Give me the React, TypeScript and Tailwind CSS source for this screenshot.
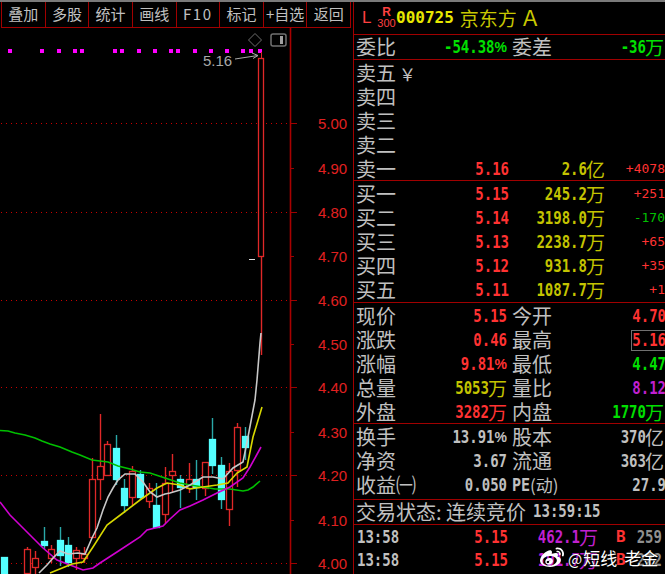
import type { ReactNode } from "react";
import { FaWeibo } from "react-icons/fa";

const CJK = "font-['Noto_Sans_CJK_SC',sans-serif]";
const MONO = "font-['DejaVu_Sans_Mono',monospace]";

const TOOLS = ["叠加", "多股", "统计", "画线", "F10", "标记", "+自选", "返回"];

// x, bodyTop, bodyBottom, wickTop, wickBottom, up
const CANDLES: [number, number, number, number, number, boolean][] = [
  [4, 557, 576, 557, 576, false],
  [27, 549, 573, 547, 576, true],
  [35, 558, 567, 551, 576, true],
  [44, 541, 545, 527, 549, false],
  [51, 549, 558, 545, 563, true],
  [60, 540, 555, 527, 566, false],
  [68, 545, 562, 537, 567, false],
  [76, 550, 558, 547, 570, true],
  [84, 554, 558, 547, 563, true],
  [92, 479, 537, 458, 537, true],
  [100, 466, 479, 414, 500, true],
  [107, 444, 475, 441, 475, true],
  [116, 448, 479, 435, 485, false],
  [124, 488, 505, 479, 513, false],
  [132, 471, 497, 466, 505, true],
  [140, 474, 497, 470, 500, false],
  [149, 488, 501, 483, 508, true],
  [156, 505, 527, 483, 527, false],
  [165, 483, 514, 467, 523, true],
  [172, 471, 475, 454, 492, true],
  [180, 479, 487, 475, 508, false],
  [189, 479, 488, 463, 493, true],
  [196, 479, 487, 460, 500, false],
  [205, 462, 488, 462, 496, true],
  [212, 439, 465, 418, 474, false],
  [221, 465, 499, 457, 509, false],
  [229, 471, 509, 463, 526, true],
  [237, 427, 470, 423, 487, true],
  [245, 436, 447, 427, 460, false],
];

const LINES: { color: string; points: string }[] = [
  {
    color: "#00c000",
    points:
      "0,430.5 8,431 15,433 25,435 35,438 42,441 50,444 60,447 72,452 80,455 92,460 100,461 108,462 118,466 130,469 140,472 150,473 165,478 180,483 190,485 200,486.5 215,489 230,489 243,491 248,490 253,487 260,481",
  },
  {
    color: "#d000d0",
    points:
      "0,502 10,515 23,528 32,537 43,548 57,560 70,565 83,570 93,568 100,563 117,552 140,537 147,530 163,526 170,519 180,510 190,506 203,500 217,493 230,487 243,478 250,467 261,447",
  },
  {
    color: "#d8d800",
    points:
      "50,573 72,564 83,562 93,547 107,525 123,513 140,500 157,488 167,483 180,485 190,489 203,487 217,485 228,483 237,473 247,467 253,437 262,407",
  },
  {
    color: "#c8c8c8",
    points:
      "39,573 47,565 53,558 60,551 68,554 78,553 85,554 92,538 97,528 103,510 108,497 113,488 118,480 125,474 135,474 143,482 150,492 157,497 165,494 170,493 180,490 190,485 203,477 213,477 223,479 233,468 243,462 248,437 255,400 257,380 260,343 261,333",
  },
];

const DOTS = [10, 42, 59, 75, 82, 115, 122, 139, 155, 171, 178, 195, 211, 227, 243, 251, 260];

const AXIS: [string, number, boolean][] = [
  ["5.00", 123, true],
  ["4.90", 168, false],
  ["4.80", 212, true],
  ["4.70", 256, false],
  ["4.60", 300, true],
  ["4.50", 344, false],
  ["4.40", 387, true],
  ["4.30", 432, false],
  ["4.20", 475, true],
  ["4.10", 520, false],
  ["4.00", 563, true],
];

function KChart() {
  return (
    <svg viewBox="0 28 353 546" className="block w-[353px] h-[546px]">
      {AXIS.map(([label, y, dotted]) => (
        <g key={label}>
          {dotted && <line x1={1} x2={290} y1={y + 0.5} y2={y + 0.5} stroke="#c80000" strokeDasharray="1 4" />}
          <line x1={290} x2={dotted ? 297 : 294} y1={y + 0.5} y2={y + 0.5} stroke="#a00000" />
          <text x={318} y={y + 6} fill="#e02020" fontSize={15} fontFamily="'Liberation Sans', sans-serif">
            {label}
          </text>
        </g>
      ))}
      <line x1={290.5} x2={290.5} y1={28} y2={574} stroke="#a80000" strokeWidth={1.6} />

      {DOTS.map((x) => (
        <rect key={x} x={x - 2} y={49} width={4} height={4} fill="#ff00ff" />
      ))}

      {/* toolbar of the chart */}
      <path d="M255 33.5 L261.5 40 L255 46.5 L248.5 40 Z" fill="none" stroke="#6e6e6e" />
      <rect x={271} y={34} width={15} height={12} rx={2} fill="none" stroke="#707070" strokeWidth={1.5} />
      <rect x={280} y={36} width={3} height={8} fill="#a0a0a0" />

      {CANDLES.map(([x, top, bottom, wickTop, wickBottom, up], i) => {
        const color = up ? "#e02828" : "#54ffff";
        const wick = up ? "#e02828" : "#2aa8a8";
        return (
          <g key={i}>
            <line x1={x + 0.5} x2={x + 0.5} y1={wickTop} y2={top} stroke={wick} strokeWidth={1.4} />
            <line x1={x + 0.5} x2={x + 0.5} y1={bottom} y2={wickBottom} stroke={wick} strokeWidth={1.4} />
            <rect
              x={x - 2.5}
              y={top + 0.5}
              width={6}
              height={Math.max(bottom - top, 1)}
              fill={up ? "#000" : color}
              stroke={color}
              strokeWidth={1.3}
            />
          </g>
        );
      })}

      {/* limit-up candle */}
      <line x1={261.5} x2={261.5} y1={52} y2={58} stroke="#e02828" />
      <rect x={258.5} y={58.5} width={5} height={198} fill="#000" stroke="#e02828" strokeWidth={1.3} />
      <line x1={261.5} x2={261.5} y1={256} y2={355} stroke="#e02828" strokeWidth={1.4} />
      <line x1={249} x2={255} y1={259.5} y2={259.5} stroke="#e0e0e0" />

      {LINES.map((line) => (
        <polyline
          key={line.color}
          points={line.points}
          fill="none"
          stroke={line.color}
          strokeWidth={1.6}
        />
      ))}

      <text x={203} y={66} fill="#a8a8a8" fontSize={15} fontFamily="'Liberation Sans', sans-serif">
        5.16
      </text>
      <path d="M235 59 L258 55.5 M252 53 L258 55.5 L253 58.5" fill="none" stroke="#a8a8a8" />
    </svg>
  );
}

function Label({ children }: { children: ReactNode }) {
  return <span className={`${CJK} text-[20px] text-[#c0c0c0] leading-[24px] whitespace-nowrap`}>{children}</span>;
}

function Value({ value, unit, color }: { value: string; unit?: string; color: string }) {
  const percent = value.endsWith("%");
  return (
    <span className={`${color} whitespace-nowrap flex items-center`}>
      <span className={`${MONO} font-bold text-[14px] scale-y-[1.2]`}>{percent ? value.slice(0, -1) : value}</span>
      {percent && <span className="font-['Liberation_Sans',sans-serif] font-bold text-[14px] scale-y-[1.1]">%</span>}
      {unit && <span className={`${CJK} text-[19px] leading-[24px] -ml-px`}>{unit}</span>}
    </span>
  );
}

function DepthRow(props: {
  label: string;
  price?: string;
  volume?: string;
  unit?: string;
  diff?: string;
  diffColor?: string;
  extra?: string;
}) {
  return (
    <div className="flex h-[24px] items-center">
      <div className="w-[153px] flex justify-between items-center">
        <Label>
          {props.label}
          {props.extra && <span className="ml-[3px] text-[17px]">{props.extra}</span>}
        </Label>
        {props.price && <Value value={props.price} color="text-[#ff3232]" />}
      </div>
      <div className="w-[96px] flex justify-end">
        {props.volume && <Value value={props.volume} unit={props.unit} color="text-[#c4c400]" />}
      </div>
      <div className={`${MONO} ${props.diffColor ?? "text-[#ff3232]"} w-[60px] text-right text-[13px]`}>{props.diff}</div>
    </div>
  );
}

function QuoteRow(props: {
  left: string;
  leftValue: string;
  leftUnit?: string;
  leftColor: string;
  right: ReactNode;
  rightValue: string;
  rightUnit?: string;
  rightColor: string;
  boxed?: boolean;
}) {
  return (
    <div className="relative flex h-[24px] items-center">
      <div className="w-[153px] flex justify-between items-center">
        <Label>{props.left}</Label>
        <Value value={props.leftValue} unit={props.leftUnit} color={props.leftColor} />
      </div>
      <div className="ml-[5px] w-[153px] flex justify-between items-center shrink-0">
        <Label>{props.right}</Label>
        <div className={props.rightUnit ? "mr-px" : "-mr-[1px]"}>
          <Value value={props.rightValue} unit={props.rightUnit} color={props.rightColor} />
        </div>
      </div>
      {props.boxed && <div className="absolute right-[-2px] top-[2px] w-[36px] h-[21px] border border-[#707070]" />}
    </div>
  );
}

function TradeRow(props: { volume: string; count: string; height: string }) {
  return (
    <div className={`flex items-center ${props.height}`}>
      <div className="w-[151px] flex justify-between items-center">
        <Value value="13:58" color="text-[#c0c0c0]" />
        <Value value="5.15" color="text-[#ff3232]" />
      </div>
      <div className="w-[90px] flex justify-end">
        <Value value={props.volume} unit="万" color="text-[#c020d0]" />
      </div>
      <div className={`${MONO} relative z-10 ml-[18px] font-bold text-[16px] text-[#ff3232]`}>B</div>
      <div className={`${MONO} ml-[11px] font-bold text-[14px] scale-y-[1.2] text-[#909090] whitespace-nowrap`}>{props.count}</div>
    </div>
  );
}

function Watermark() {
  return (
    <div className="absolute left-[539px] top-[544px] flex items-center h-[28px]">
      <FaWeibo className="w-[26px] h-[24px] text-white" />
      <span className={`${CJK} ml-[3px] text-[15px] text-white leading-[28px] [text-shadow:0_0_2px_#000] whitespace-nowrap`}>
        @
        <span className="ml-[1px] text-[17px]">
          短线<span className="ml-[7px]">老金</span>
        </span>
      </span>
    </div>
  );
}

export default function App() {
  return (
    <div className="relative w-[665px] h-[574px] overflow-hidden bg-black">
      <div className="h-[2px] bg-[#7a7a7a]" />
      <div className="flex h-[572px]">
        <div className="w-[353px] shrink-0">
          <div className="flex h-[26px] ml-px w-[350px] border-b border-l border-[#a00000]">
            {TOOLS.map((tool) => (
              <div
                key={tool}
                className={`flex-1 flex items-center justify-center border-r border-[#a00000] text-[15px] text-[#c0c0c0] whitespace-nowrap ${CJK} ${
                  tool === "F10" ? "tracking-[1.5px]" : ""
                }`}
              >
                {tool}
              </div>
            ))}
          </div>
          <KChart />
        </div>

        <div className="flex-1 min-w-0 overflow-hidden border-l border-[#a00000]">
          <div className="flex h-[33px] items-center border-b border-[#a00000]">
            <span className="ml-[8px] w-[15px] text-[17px] text-[#ff4040] font-['Liberation_Sans',sans-serif]">L</span>
            <span className="flex flex-col items-center w-[19px] text-[#ff4040] font-['Liberation_Sans',sans-serif] leading-[11px]">
              <span className="text-[12px] font-bold">R</span>
              <span className="text-[11px]">300</span>
            </span>
            <span className={`${MONO} font-bold text-[16px] text-[#e8e800]`}>000725</span>
            <span className={`${CJK} ml-[6px] text-[19px] text-[#c8c800]`}>京东方</span>
            <span className={`${CJK} ml-[3px] text-[21px] text-[#c8c800]`}>Ａ</span>
          </div>

          <div className="pl-[2px] h-[25px] border-b border-[#a00000]">
            <QuoteRow
              left="委比"
              leftValue="-54.38%"
              leftColor="text-[#00e000]"
              right="委差"
              rightValue="-36"
              rightUnit="万"
              rightColor="text-[#00e000]"
            />
          </div>

          <div className="pl-[2px] pt-px h-[121px] border-b border-[#a00000]">
            <DepthRow label="卖五" extra="￥" />
            <DepthRow label="卖四" />
            <DepthRow label="卖三" />
            <DepthRow label="卖二" />
            <DepthRow label="卖一" price="5.16" volume="2.6" unit="亿" diff="+4078" />
          </div>

          <div className="pl-[2px] pt-px h-[122px] border-b border-[#a00000]">
            <DepthRow label="买一" price="5.15" volume="245.2" unit="万" diff="+251" />
            <DepthRow label="买二" price="5.14" volume="3198.0" unit="万" diff="-170" diffColor="text-[#00c000]" />
            <DepthRow label="买三" price="5.13" volume="2238.7" unit="万" diff="+65" />
            <DepthRow label="买四" price="5.12" volume="931.8" unit="万" diff="+35" />
            <DepthRow label="买五" price="5.11" volume="1087.7" unit="万" diff="+1" />
          </div>

          <div className="pl-[2px] pt-px h-[121px] border-b border-[#a00000]">
            <QuoteRow left="现价" leftValue="5.15" leftColor="text-[#ff3232]" right="今开" rightValue="4.70" rightColor="text-[#ff3232]" />
            <QuoteRow left="涨跌" leftValue="0.46" leftColor="text-[#ff3232]" right="最高" rightValue="5.16" rightColor="text-[#ff3232]" boxed />
            <QuoteRow left="涨幅" leftValue="9.81%" leftColor="text-[#ff3232]" right="最低" rightValue="4.47" rightColor="text-[#00e000]" />
            <QuoteRow left="总量" leftValue="5053" leftUnit="万" leftColor="text-[#c4c400]" right="量比" rightValue="8.12" rightColor="text-[#c020d0]" />
            <QuoteRow left="外盘" leftValue="3282" leftUnit="万" leftColor="text-[#ff3232]" right="内盘" rightValue="1770" rightUnit="万" rightColor="text-[#00e000]" />
          </div>

          <div className="pl-[2px] pt-px h-[76px] border-b border-[#a00000]">
            <QuoteRow left="换手" leftValue="13.91%" leftColor="text-[#c0c0c0]" right="股本" rightValue="370" rightUnit="亿" rightColor="text-[#c0c0c0]" />
            <QuoteRow left="净资" leftValue="3.67" leftColor="text-[#c0c0c0]" right="流通" rightValue="363" rightUnit="亿" rightColor="text-[#c0c0c0]" />
            <QuoteRow
              left="收益㈠"
              leftValue="0.050"
              leftColor="text-[#c0c0c0]"
              right={
                <span className="flex items-center">
                  <span className={`${MONO} font-bold text-[15px] scale-y-[1.15]`}>PE</span>
                  <span className="text-[17px]">(动)</span>
                </span>
              }
              rightValue="27.9"
              rightColor="text-[#c0c0c0]"
            />
          </div>

          <div className="pl-[2px] h-[25px] flex items-center border-b border-[#a00000] pb-px">
            <Label>交易状态: 连续竞价</Label>
            <span className="ml-[7px]">
              <Value value="13:59:15" color="text-[#c0c0c0]" />
            </span>
          </div>

          <div className="pl-[3px]">
            <TradeRow volume="462.1" count="259" height="h-[24px]" />
            <TradeRow volume="191.7" count="222" height="h-[22px]" />
          </div>
        </div>
      </div>
      <Watermark />
    </div>
  );
}
